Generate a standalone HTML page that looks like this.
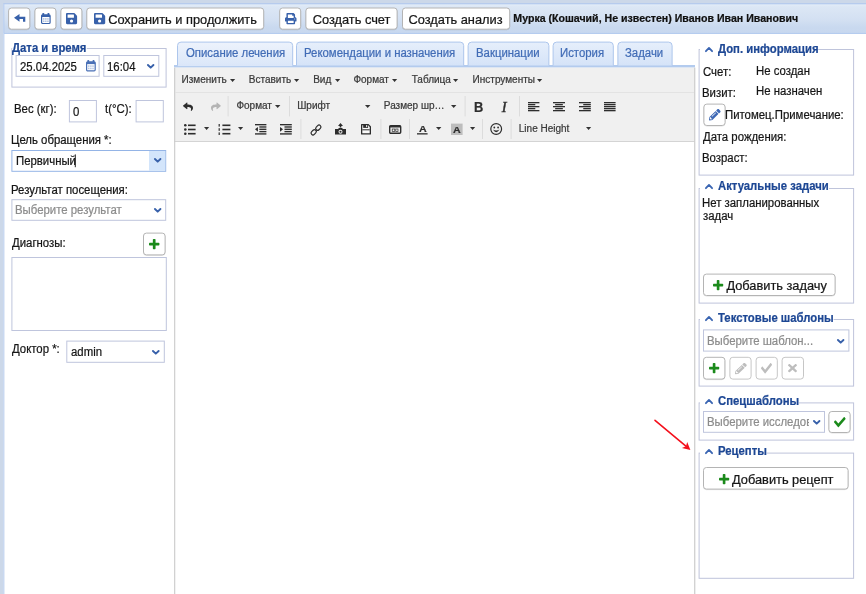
<!DOCTYPE html>
<html lang="ru">
<head>
<meta charset="utf-8">
<title>Визит</title>
<style>
*{box-sizing:border-box;margin:0;padding:0}
html,body{width:866px;height:594px;overflow:hidden}
body{background:#fff;font-family:"Liberation Sans",sans-serif;font-size:12px;color:#161616;position:relative}
#w{position:absolute;left:0;top:0;width:866px;height:594px;will-change:transform}
.a{position:absolute}
.t{position:absolute;white-space:nowrap;line-height:1;transform-origin:0 50%;-webkit-text-stroke:.22px currentColor}
svg{position:absolute;overflow:visible}
</style>
</head>
<body>
<div id="w"><svg style="left:0;top:0" width="866" height="594" viewBox="0 0 866 594"><defs><linearGradient id="tg" x1="0" y1="0" x2="0" y2="1"><stop offset="0" stop-color="#e4edf8"/><stop offset=".08" stop-color="#dce7f5"/><stop offset=".55" stop-color="#d3e0f2"/><stop offset=".8" stop-color="#c9d9ef"/><stop offset="1" stop-color="#c8d8ef"/></linearGradient><linearGradient id="ta" x1="0" y1="0" x2="0" y2="1"><stop offset="0" stop-color="#edf3fc"/><stop offset="1" stop-color="#dbe7f9"/></linearGradient><linearGradient id="tb" x1="0" y1="0" x2="0" y2="1"><stop offset="0" stop-color="#e6effb"/><stop offset="1" stop-color="#d5e3f8"/></linearGradient></defs>
<rect x="0" y="0" width="866" height="4" fill="#ccd8e9"/>
<rect x="0" y="0" width="3.3" height="594" fill="#ccd8e9"/>
<rect x="3.3" y="3.3" width="863" height="30.6" fill="#adc7ee"/>
<rect x="4.3" y="4.3" width="862" height="28.6" fill="url(#tg)"/>
<rect x="3.3" y="33.9" width="1.1" height="561" fill="#bbcfee"/>
<rect x="8.6" y="8.6" width="21.2" height="21.2" rx="2.9" fill="none" stroke="#000" stroke-opacity=".10"/>
<rect x="8.6" y="8" width="21.2" height="21.2" rx="2.9" fill="#fff" stroke="#b4b4b4"/>
<rect x="34.9" y="8.6" width="21" height="21.2" rx="2.9" fill="none" stroke="#000" stroke-opacity=".10"/>
<rect x="34.9" y="8" width="21" height="21.2" rx="2.9" fill="#fff" stroke="#b4b4b4"/>
<rect x="60.9" y="8.6" width="21" height="21.2" rx="2.9" fill="none" stroke="#000" stroke-opacity=".10"/>
<rect x="60.9" y="8" width="21" height="21.2" rx="2.9" fill="#fff" stroke="#b4b4b4"/>
<rect x="86.8" y="8.6" width="176.9" height="21.2" rx="2.9" fill="none" stroke="#000" stroke-opacity=".10"/>
<rect x="86.8" y="8" width="176.9" height="21.2" rx="2.9" fill="#fff" stroke="#b4b4b4"/>
<rect x="279.7" y="8.6" width="21" height="21.2" rx="2.9" fill="none" stroke="#000" stroke-opacity=".10"/>
<rect x="279.7" y="8" width="21" height="21.2" rx="2.9" fill="#fff" stroke="#b4b4b4"/>
<rect x="305.9" y="8.6" width="91.2" height="21.2" rx="2.9" fill="none" stroke="#000" stroke-opacity=".10"/>
<rect x="305.9" y="8" width="91.2" height="21.2" rx="2.9" fill="#fff" stroke="#b4b4b4"/>
<rect x="402.5" y="8.6" width="107.2" height="21.2" rx="2.9" fill="none" stroke="#000" stroke-opacity=".10"/>
<rect x="402.5" y="8" width="107.2" height="21.2" rx="2.9" fill="#fff" stroke="#b4b4b4"/>
<rect x="11.9" y="48.5" width="154.2" height="38.6" rx="0" fill="none" stroke="#bfc4db"/>
<rect x="12.2" y="40" width="74.6" height="14" fill="#fff"/>
<rect x="16.1" y="55.5" width="83" height="20.8" rx="0" fill="#fff" stroke="#bfc5dd"/>
<rect x="103.8" y="55.5" width="55" height="20.8" rx="0" fill="#fff" stroke="#bfc5dd"/>
<rect x="69.4" y="100.5" width="27" height="21.4" rx="0" fill="#fff" stroke="#bfc5dd"/>
<rect x="136.1" y="100.5" width="27.2" height="21.4" rx="0" fill="#fff" stroke="#bfc5dd"/>
<rect x="11.9" y="150.5" width="153.8" height="20.8" rx="0" fill="#fff" stroke="#94b4e6"/>
<rect x="149" y="151" width="16.2" height="19.8" fill="#d3e5fb"/>
<rect x="74.8" y="154.4" width="1" height="12.8" fill="#222"/>
<rect x="11.9" y="199.7" width="153.8" height="20.6" rx="0" fill="#fff" stroke="#bfc5dd"/>
<rect x="143.5" y="233.7" width="21.6" height="21.8" rx="2.9" fill="none" stroke="#000" stroke-opacity=".10"/>
<rect x="143.5" y="233.1" width="21.6" height="21.8" rx="2.9" fill="#fff" stroke="#b4b4b4"/>
<rect x="11.9" y="257.5" width="154.4" height="73" rx="0" fill="#fff" stroke="#bfc5dd"/>
<rect x="66.8" y="341.1" width="97.5" height="21.2" rx="0" fill="#fff" stroke="#bfc5dd"/>
<rect x="174" y="65" width="521" height="2.6" fill="#b3cbee"/>
<path d="M177.5 65.4 V45.6 Q177.5 42.1 181 42.1 H289.2 Q292.7 42.1 292.7 45.6 V65.4" fill="url(#ta)" stroke="#adc6ec"/>
<path d="M296.5 65.4 V45.6 Q296.5 42.1 300 42.1 H460.2 Q463.7 42.1 463.7 45.6 V65.4" fill="url(#tb)" stroke="#adc6ec"/>
<path d="M468.1 65.4 V45.6 Q468.1 42.1 471.6 42.1 H545.4 Q548.9 42.1 548.9 45.6 V65.4" fill="url(#tb)" stroke="#adc6ec"/>
<path d="M553.1 65.4 V45.6 Q553.1 42.1 556.6 42.1 H609.8 Q613.3 42.1 613.3 45.6 V65.4" fill="url(#tb)" stroke="#adc6ec"/>
<path d="M617.9 65.4 V45.6 Q617.9 42.1 621.4 42.1 H668.6 Q672.1 42.1 672.1 45.6 V65.4" fill="url(#tb)" stroke="#adc6ec"/>
<rect x="178" y="64.8" width="114.2" height="1.3" fill="#dbe7f9"/>
<rect x="174" y="67.6" width="521" height="73.6" fill="#f0f0f0"/>
<rect x="174" y="141" width="521" height="1" fill="#d4d4d4"/>
<rect x="174.1" y="67.6" width="1.15" height="527" fill="#cccccc"/>
<rect x="694.1" y="67.6" width="1.25" height="527" fill="#cecece"/>
<rect x="175" y="92" width="519" height="1" fill="#e3e3e3"/>
<rect x="227.6" y="96" width="1" height="20.4" fill="#dcdcdc"/>
<rect x="289" y="96" width="1" height="20.4" fill="#dcdcdc"/>
<rect x="464.6" y="96" width="1" height="20.4" fill="#dcdcdc"/>
<rect x="519" y="96" width="1" height="20.4" fill="#dcdcdc"/>
<rect x="300.4" y="119" width="1" height="20" fill="#dcdcdc"/>
<rect x="380.4" y="119" width="1" height="20" fill="#dcdcdc"/>
<rect x="409" y="119" width="1" height="20" fill="#dcdcdc"/>
<rect x="417" y="133.2" width="10.6" height="1.3" fill="#2d2d2d"/>
<rect x="451" y="123.6" width="11.6" height="11.4" fill="#bdbdbd"/>
<rect x="482" y="119" width="1" height="20" fill="#dcdcdc"/>
<rect x="510.6" y="119" width="1" height="20" fill="#dcdcdc"/>
<rect x="699.1" y="49.5" width="154.5" height="125.6" rx="0" fill="none" stroke="#bfc4db"/>
<rect x="700" y="41" width="118.2" height="14" fill="#fff"/>
<rect x="703.9" y="104.7" width="21.2" height="21.4" rx="2.9" fill="none" stroke="#000" stroke-opacity=".10"/>
<rect x="703.9" y="104.1" width="21.2" height="21.4" rx="2.9" fill="#fff" stroke="#b4b4b4"/>
<rect x="699.1" y="188.5" width="154.5" height="114.6" rx="0" fill="none" stroke="#bfc4db"/>
<rect x="700" y="180" width="129" height="14" fill="#fff"/>
<rect x="703.5" y="274.7" width="131.6" height="21.4" rx="2.9" fill="none" stroke="#000" stroke-opacity=".10"/>
<rect x="703.5" y="274.1" width="131.6" height="21.4" rx="2.9" fill="#fff" stroke="#b4b4b4"/>
<rect x="699.1" y="319.5" width="154.5" height="66.6" rx="0" fill="none" stroke="#bfc4db"/>
<rect x="700" y="311" width="133.6" height="14" fill="#fff"/>
<rect x="703.5" y="329.9" width="145.4" height="21.2" rx="0" fill="#fff" stroke="#bfc5dd"/>
<rect x="703.5" y="357.9" width="21.4" height="21.8" rx="2.9" fill="none" stroke="#000" stroke-opacity=".10"/>
<rect x="703.5" y="357.3" width="21.4" height="21.8" rx="2.9" fill="#fff" stroke="#b4b4b4"/>
<rect x="729.9" y="357.3" width="21.2" height="21.8" rx="2.9" fill="#fff" stroke="#c6c6c6"/>
<rect x="756.1" y="357.3" width="21.2" height="21.8" rx="2.9" fill="#fff" stroke="#c6c6c6"/>
<rect x="782.1" y="357.3" width="21.4" height="21.8" rx="2.9" fill="#fff" stroke="#c6c6c6"/>
<rect x="699.1" y="402.9" width="154.5" height="37.2" rx="0" fill="none" stroke="#bfc4db"/>
<rect x="700" y="394.4" width="99" height="14" fill="#fff"/>
<rect x="703.5" y="411.5" width="121" height="20.8" rx="0" fill="#fff" stroke="#bfc5dd"/>
<rect x="828.9" y="412.1" width="21.2" height="21" rx="2.9" fill="none" stroke="#000" stroke-opacity=".10"/>
<rect x="828.9" y="411.5" width="21.2" height="21" rx="2.9" fill="#fff" stroke="#b4b4b4"/>
<rect x="699.1" y="453.1" width="154.5" height="125.2" rx="0" fill="none" stroke="#bfc4db"/>
<rect x="700" y="444.6" width="66.6" height="14" fill="#fff"/>
<rect x="703.5" y="468.1" width="144.6" height="21.6" rx="2.9" fill="none" stroke="#000" stroke-opacity=".10"/>
<rect x="703.5" y="467.5" width="144.6" height="21.6" rx="2.9" fill="#fff" stroke="#b4b4b4"/>
</svg>
<svg style="left:13.9px;top:14.4px" width="11.3" height="7.7" viewBox="0 0 11.3 7.7" preserveAspectRatio="none"><path d="M0 3.850 L5.500 0 V2.700 H11.300 V7.700 H9 V5 H5.500 V7.700 Z" fill="#3861aa"/></svg>
<svg style="left:40.5px;top:13.3px" width="9.7" height="11.1" viewBox="0 0 9.7 11.1" preserveAspectRatio="none"><rect x="1.400" y="0" width="1.700" height="2.600" rx=".5" fill="#3861aa"/><rect x="6.600" y="0" width="1.700" height="2.600" rx=".5" fill="#3861aa"/><rect x=".6" y="1.900" width="8.500" height="8.600" rx="1.100" fill="#fff" stroke="#3861aa" stroke-width="1.200"/><rect x=".6" y="1.900" width="8.500" height="2.100" fill="#3861aa"/><rect x="2.0" y="5.2" width="1.500" height="1.500" fill="#3861aa" fill-opacity=".4"/><rect x="4.1" y="5.2" width="1.500" height="1.500" fill="#3861aa" fill-opacity=".4"/><rect x="6.2" y="5.2" width="1.500" height="1.500" fill="#3861aa" fill-opacity=".4"/><rect x="2.0" y="7.5" width="1.500" height="1.500" fill="#3861aa" fill-opacity=".4"/><rect x="4.1" y="7.5" width="1.500" height="1.500" fill="#3861aa" fill-opacity=".4"/><rect x="6.2" y="7.5" width="1.500" height="1.500" fill="#3861aa" fill-opacity=".4"/></svg>
<svg style="left:65.9px;top:13.3px" width="11.1" height="11.2" viewBox="0 32 448 448" preserveAspectRatio="none"><path fill="#3861aa" d="M433.941 129.941l-83.882-83.882A48 48 0 0 0 316.118 32H48C21.490 32 0 53.490 0 80v352c0 26.510 21.490 48 48 48h352c26.510 0 48-21.490 48-48V163.882a48 48 0 0 0-14.059-33.941zM224 416c-35.346 0-64-28.654-64-64 0-35.346 28.654-64 64-64s64 28.654 64 64c0 35.346-28.654 64-64 64zm96-304.520V212c0 6.627-5.373 12-12 12H76c-6.627 0-12-5.373-12-12V108c0-6.627 5.373-12 12-12h228.520c3.183 0 6.235 1.264 8.485 3.515l3.480 3.480A11.996 11.996 0 0 1 320 111.480z"/></svg>
<svg style="left:93.9px;top:13.3px" width="11.2" height="11.2" viewBox="0 32 448 448" preserveAspectRatio="none"><path fill="#3861aa" d="M433.941 129.941l-83.882-83.882A48 48 0 0 0 316.118 32H48C21.490 32 0 53.490 0 80v352c0 26.510 21.490 48 48 48h352c26.510 0 48-21.490 48-48V163.882a48 48 0 0 0-14.059-33.941zM224 416c-35.346 0-64-28.654-64-64 0-35.346 28.654-64 64-64s64 28.654 64 64c0 35.346-28.654 64-64 64zm96-304.520V212c0 6.627-5.373 12-12 12H76c-6.627 0-12-5.373-12-12V108c0-6.627 5.373-12 12-12h228.520c3.183 0 6.235 1.264 8.485 3.515l3.480 3.480A11.996 11.996 0 0 1 320 111.480z"/></svg>
<span class="t" style="left:108.16px;top:14.00px;font-size:12.8px;color:#161616;">Сохранить и продолжить</span>
<svg style="left:284.5px;top:13.3px" width="11.5" height="11.3" viewBox="0 0 512 512" preserveAspectRatio="none"><path fill="#3861aa" d="M448 192V77.250c0-8.490-3.370-16.620-9.370-22.630L393.370 9.370c-6-6-14.140-9.370-22.630-9.370H96C78.330 0 64 14.330 64 32v160c-35.350 0-64 28.650-64 64v112c0 8.840 7.160 16 16 16h48v96c0 17.670 14.330 32 32 32h320c17.670 0 32-14.330 32-32v-96h48c8.840 0 16-7.160 16-16V256c0-35.350-28.650-64-64-64zm-64 256H128v-96h256v96zm0-224H128V64h192v48c0 8.840 7.160 16 16 16h48v96zm48 72c-13.250 0-24-10.750-24-24 0-13.260 10.750-24 24-24s24 10.740 24 24c0 13.250-10.750 24-24 24z"/></svg>
<span class="t" style="left:312.76px;top:14.00px;font-size:12.8px;color:#161616;">Создать счет</span>
<span class="t" style="left:408.56px;top:14.00px;font-size:12.8px;color:#161616;">Создать анализ</span>
<span class="t" style="left:513.35px;top:13.00px;font-size:10.6px;color:#111;font-weight:bold;">Мурка (Кошачий, Не известен) Иванов Иван Иванович</span>
<span class="t" style="left:12.40px;top:42.00px;font-size:12px;color:#1d4794;font-weight:bold;transform:scaleX(0.9430);">Дата и время</span>
<span class="t" style="left:19.88px;top:61.00px;font-size:12px;color:#161616;transform:scaleX(0.9480);">25.04.2025</span>
<svg style="left:86.4px;top:60.2px" width="9.8" height="11.4" viewBox="0 0 9.7 11.1" preserveAspectRatio="none"><rect x="1.400" y="0" width="1.700" height="2.600" rx=".5" fill="#4a70b6"/><rect x="6.600" y="0" width="1.700" height="2.600" rx=".5" fill="#4a70b6"/><rect x=".6" y="1.900" width="8.500" height="8.600" rx="1.100" fill="#fff" stroke="#4a70b6" stroke-width="1.200"/><rect x=".6" y="1.900" width="8.500" height="2.100" fill="#4a70b6"/><rect x="2.0" y="5.2" width="1.500" height="1.500" fill="#4a70b6" fill-opacity=".4"/><rect x="4.1" y="5.2" width="1.500" height="1.500" fill="#4a70b6" fill-opacity=".4"/><rect x="6.2" y="5.2" width="1.500" height="1.500" fill="#4a70b6" fill-opacity=".4"/><rect x="2.0" y="7.5" width="1.500" height="1.500" fill="#4a70b6" fill-opacity=".4"/><rect x="4.1" y="7.5" width="1.500" height="1.500" fill="#4a70b6" fill-opacity=".4"/><rect x="6.2" y="7.5" width="1.500" height="1.500" fill="#4a70b6" fill-opacity=".4"/></svg>
<span class="t" style="left:107.05px;top:61.00px;font-size:12px;color:#161616;transform:scaleX(0.9480);">16:04</span>
<svg style="left:146.8px;top:63.8px" width="7.4" height="4.6" viewBox="0 0 7.4 4.6" preserveAspectRatio="none"><path d="M0.95 0.95 L3.6999999999999886 3.6500000000000083 L6.449999999999977 0.95" fill="none" stroke="#3861aa" stroke-width="1.9" stroke-linecap="round" stroke-linejoin="round"/></svg>
<span class="t" style="left:13.60px;top:103.00px;font-size:12px;color:#161616;transform:scaleX(0.9480);">Вес (кг):</span>
<span class="t" style="left:72.52px;top:106.00px;font-size:12px;color:#161616;transform:scaleX(0.9480);">0</span>
<span class="t" style="left:105.24px;top:103.00px;font-size:12px;color:#161616;transform:scaleX(0.9480);">t(°C):</span>
<span class="t" style="left:11.00px;top:134.00px;font-size:12px;color:#161616;transform:scaleX(0.9480);">Цель обращения *:</span>
<span class="t" style="left:15.50px;top:155.00px;font-size:12px;color:#161616;transform:scaleX(0.9480);">Первичный</span>
<svg style="left:153.6px;top:158.1px" width="7.4" height="4.6" viewBox="0 0 7.4 4.6" preserveAspectRatio="none"><path d="M0.95 0.95 L3.700000000000003 3.649999999999994 L6.4500000000000055 0.95" fill="none" stroke="#3861aa" stroke-width="1.9" stroke-linecap="round" stroke-linejoin="round"/></svg>
<span class="t" style="left:11.00px;top:184.00px;font-size:12px;color:#161616;transform:scaleX(0.9480);">Результат посещения:</span>
<span class="t" style="left:15.40px;top:204.00px;font-size:12px;color:#8c8c8c;transform:scaleX(0.9480);">Выберите результат</span>
<svg style="left:153.6px;top:208.2px" width="7.4" height="4.6" viewBox="0 0 7.4 4.6" preserveAspectRatio="none"><path d="M0.95 0.95 L3.700000000000003 3.6500000000000226 L6.4500000000000055 0.95" fill="none" stroke="#3861aa" stroke-width="1.9" stroke-linecap="round" stroke-linejoin="round"/></svg>
<span class="t" style="left:11.60px;top:237.00px;font-size:12px;color:#161616;transform:scaleX(0.9480);">Диагнозы:</span>
<svg style="left:149px;top:239px" width="10.4" height="10.2" viewBox="0 0 10 10" preserveAspectRatio="none"><rect x="3.700" y="0" width="2.600" height="10" rx=".7" fill="#1b8a1b"/><rect x="0" y="3.700" width="10" height="2.600" rx=".7" fill="#1b8a1b"/></svg>
<span class="t" style="left:11.60px;top:343.00px;font-size:12px;color:#161616;transform:scaleX(0.9480);">Доктор *:</span>
<span class="t" style="left:70.53px;top:346.00px;font-size:12px;color:#161616;transform:scaleX(0.9480);">admin</span>
<svg style="left:152.2px;top:349.6px" width="7.6" height="4.6" viewBox="0 0 7.6 4.6" preserveAspectRatio="none"><path d="M0.95 0.95 L3.8000000000000114 3.6499999999999657 L6.650000000000023 0.95" fill="none" stroke="#3861aa" stroke-width="1.9" stroke-linecap="round" stroke-linejoin="round"/></svg>
<span class="t" style="left:185.51px;top:47.00px;font-size:12px;color:#416cb6;transform:scaleX(0.9480);">Описание лечения</span>
<span class="t" style="left:304.00px;top:47.00px;font-size:12px;color:#416cb6;transform:scaleX(0.9480);">Рекомендации и назначения</span>
<span class="t" style="left:476.00px;top:47.00px;font-size:12px;color:#416cb6;transform:scaleX(0.9480);">Вакцинации</span>
<span class="t" style="left:560.00px;top:47.00px;font-size:12px;color:#416cb6;transform:scaleX(0.9480);">История</span>
<span class="t" style="left:625.42px;top:47.00px;font-size:12px;color:#416cb6;transform:scaleX(0.9480);">Задачи</span>
<span class="t" style="left:181.60px;top:75.00px;font-size:10px;color:#3a3a3a;">Изменить</span>
<svg style="left:230px;top:78.9px" width="5.2" height="3.0" viewBox="0 0 5.2 3.0" preserveAspectRatio="none"><path d="M0 0 H5.2 L2.6 3.0 Z" fill="#333"/></svg>
<span class="t" style="left:248.80px;top:75.00px;font-size:10px;color:#3a3a3a;">Вставить</span>
<svg style="left:294.4px;top:78.9px" width="5.2" height="3.0" viewBox="0 0 5.2 3.0" preserveAspectRatio="none"><path d="M0 0 H5.2 L2.6 3.0 Z" fill="#333"/></svg>
<span class="t" style="left:313.20px;top:75.00px;font-size:10px;color:#3a3a3a;">Вид</span>
<svg style="left:335px;top:78.9px" width="5.2" height="3.0" viewBox="0 0 5.2 3.0" preserveAspectRatio="none"><path d="M0 0 H5.2 L2.6 3.0 Z" fill="#333"/></svg>
<span class="t" style="left:353.43px;top:75.00px;font-size:10px;color:#3a3a3a;">Формат</span>
<svg style="left:392px;top:78.9px" width="5.2" height="3.0" viewBox="0 0 5.2 3.0" preserveAspectRatio="none"><path d="M0 0 H5.2 L2.6 3.0 Z" fill="#333"/></svg>
<span class="t" style="left:411.67px;top:75.00px;font-size:10px;color:#3a3a3a;">Таблица</span>
<svg style="left:453.4px;top:78.9px" width="5.2" height="3.0" viewBox="0 0 5.2 3.0" preserveAspectRatio="none"><path d="M0 0 H5.2 L2.6 3.0 Z" fill="#333"/></svg>
<span class="t" style="left:472.60px;top:75.00px;font-size:10px;color:#3a3a3a;">Инструменты</span>
<svg style="left:537.4px;top:78.9px" width="5.2" height="3.0" viewBox="0 0 5.2 3.0" preserveAspectRatio="none"><path d="M0 0 H5.2 L2.6 3.0 Z" fill="#333"/></svg>
<svg style="left:183px;top:102px" width="10" height="9.6" viewBox="0 0 512 512" preserveAspectRatio="none"><path fill="#2d2d2d" d="M8.309 189.836L184.313 37.851C199.719 24.546 224 35.347 224 56.015v80.053c160.629 1.839 288 34.032 288 186.258 0 61.441-39.581 122.309-83.333 154.132-13.653 9.931-33.111-2.533-28.077-18.631 45.344-145.012-21.507-183.510-176.590-185.742V360c0 20.700-24.300 31.453-39.687 18.164l-176.004-152c-11.071-9.562-11.086-26.753 0-36.328z"/></svg>
<svg style="left:210.6px;top:102px" width="9.8" height="9.6" viewBox="0 0 512 512" preserveAspectRatio="none"><g transform="translate(512,0) scale(-1,1)"><path fill="#b4b4b4" d="M8.309 189.836L184.313 37.851C199.719 24.546 224 35.347 224 56.015v80.053c160.629 1.839 288 34.032 288 186.258 0 61.441-39.581 122.309-83.333 154.132-13.653 9.931-33.111-2.533-28.077-18.631 45.344-145.012-21.507-183.510-176.590-185.742V360c0 20.700-24.300 31.453-39.687 18.164l-176.004-152c-11.071-9.562-11.086-26.753 0-36.328z"/></g></svg>
<span class="t" style="left:236.43px;top:101.00px;font-size:10px;color:#3a3a3a;">Формат</span>
<svg style="left:275px;top:104.85px" width="5.4" height="3.0" viewBox="0 0 5.4 3.0" preserveAspectRatio="none"><path d="M0 0 H5.4 L2.7 3.0 Z" fill="#333"/></svg>
<span class="t" style="left:297.20px;top:101.00px;font-size:10px;color:#3a3a3a;">Шрифт</span>
<svg style="left:364.6px;top:104.85px" width="5.4" height="3.0" viewBox="0 0 5.4 3.0" preserveAspectRatio="none"><path d="M0 0 H5.4 L2.7 3.0 Z" fill="#333"/></svg>
<span class="t" style="left:383.80px;top:101.00px;font-size:10px;color:#3a3a3a;">Размер шр…</span>
<svg style="left:451px;top:104.85px" width="5.4" height="3.0" viewBox="0 0 5.4 3.0" preserveAspectRatio="none"><path d="M0 0 H5.4 L2.7 3.0 Z" fill="#333"/></svg>
<span class="t" style="left:474.36px;top:100.00px;font-size:14px;color:#2d2d2d;font-weight:bold;transform:scaleX(0.9176);">B</span>
<span class="t" style="left:501.78px;top:100.00px;font-size:14.5px;color:#2d2d2d;font-family:'Liberation Serif',serif;font-style:italic;-webkit-text-stroke:.45px #2d2d2d;">I</span>
<svg style="left:528px;top:102.4px" width="11.4" height="9.3" viewBox="0 0 11.4 9.3" preserveAspectRatio="none"><rect x="0.00" y="0" width="11.40" height="1.3" fill="#2d2d2d"/><rect x="0.00" y="2.0" width="7.30" height="1.3" fill="#2d2d2d"/><rect x="0.00" y="4.0" width="11.40" height="1.3" fill="#2d2d2d"/><rect x="0.00" y="6.0" width="7.30" height="1.3" fill="#2d2d2d"/><rect x="0.00" y="8.0" width="11.40" height="1.3" fill="#2d2d2d"/></svg>
<svg style="left:553px;top:102.4px" width="12" height="9.3" viewBox="0 0 12 9.3" preserveAspectRatio="none"><rect x="0.00" y="0" width="12.00" height="1.3" fill="#2d2d2d"/><rect x="2.16" y="2.0" width="7.68" height="1.3" fill="#2d2d2d"/><rect x="0.00" y="4.0" width="12.00" height="1.3" fill="#2d2d2d"/><rect x="2.16" y="6.0" width="7.68" height="1.3" fill="#2d2d2d"/><rect x="0.00" y="8.0" width="12.00" height="1.3" fill="#2d2d2d"/></svg>
<svg style="left:578.6px;top:102.4px" width="11.8" height="9.3" viewBox="0 0 11.8 9.3" preserveAspectRatio="none"><rect x="0.00" y="0" width="11.80" height="1.3" fill="#2d2d2d"/><rect x="4.25" y="2.0" width="7.55" height="1.3" fill="#2d2d2d"/><rect x="0.00" y="4.0" width="11.80" height="1.3" fill="#2d2d2d"/><rect x="4.25" y="6.0" width="7.55" height="1.3" fill="#2d2d2d"/><rect x="0.00" y="8.0" width="11.80" height="1.3" fill="#2d2d2d"/></svg>
<svg style="left:604px;top:102.4px" width="11.6" height="9.3" viewBox="0 0 11.6 9.3" preserveAspectRatio="none"><rect x="0.00" y="0" width="11.60" height="1.3" fill="#2d2d2d"/><rect x="0.00" y="2.0" width="11.60" height="1.3" fill="#2d2d2d"/><rect x="0.00" y="4.0" width="11.60" height="1.3" fill="#2d2d2d"/><rect x="0.00" y="6.0" width="11.60" height="1.3" fill="#2d2d2d"/><rect x="0.00" y="8.0" width="11.60" height="1.3" fill="#2d2d2d"/></svg>
<svg style="left:184px;top:124px" width="11.6" height="11" viewBox="0 0 11.6 11" preserveAspectRatio="none"><circle cx="1.300" cy="1.3" r="1.300" fill="#2d2d2d"/><rect x="4" y="0.5" width="7.600" height="1.600" fill="#2d2d2d"/><circle cx="1.300" cy="5.5" r="1.300" fill="#2d2d2d"/><rect x="4" y="4.7" width="7.600" height="1.600" fill="#2d2d2d"/><circle cx="1.300" cy="9.7" r="1.300" fill="#2d2d2d"/><rect x="4" y="8.899999999999999" width="7.600" height="1.600" fill="#2d2d2d"/></svg>
<svg style="left:204px;top:126.55px" width="5.2" height="3.0" viewBox="0 0 5.2 3.0" preserveAspectRatio="none"><path d="M0 0 H5.2 L2.6 3.0 Z" fill="#333"/></svg>
<svg style="left:218px;top:124px" width="12.4" height="11" viewBox="0 0 12.4 11" preserveAspectRatio="none"><rect x="0.600" y="0.0" width="1.200" height="2.600" fill="#2d2d2d"/><rect x="4.400" y="0.5" width="8" height="1.600" fill="#2d2d2d"/><rect x="0.600" y="4.2" width="1.200" height="2.600" fill="#2d2d2d"/><rect x="4.400" y="4.7" width="8" height="1.600" fill="#2d2d2d"/><rect x="0.600" y="8.399999999999999" width="1.200" height="2.600" fill="#2d2d2d"/><rect x="4.400" y="8.899999999999999" width="8" height="1.600" fill="#2d2d2d"/></svg>
<svg style="left:238px;top:126.55px" width="5.2" height="3.0" viewBox="0 0 5.2 3.0" preserveAspectRatio="none"><path d="M0 0 H5.2 L2.6 3.0 Z" fill="#333"/></svg>
<svg style="left:255px;top:124px" width="11.4" height="10.6" viewBox="0 0 11.6 10.55" preserveAspectRatio="none"><rect x="0" y="0" width="11.6" height="1.350" fill="#2d2d2d"/><rect x="4.4" y="2.3" width="7.199999999999999" height="1.350" fill="#2d2d2d"/><rect x="4.4" y="4.6" width="7.199999999999999" height="1.350" fill="#2d2d2d"/><rect x="4.4" y="6.9" width="7.199999999999999" height="1.350" fill="#2d2d2d"/><rect x="0" y="9.2" width="11.6" height="1.350" fill="#2d2d2d"/><path d="M3 2.900 V7.700 L0 5.300 Z" fill="#2d2d2d"/></svg>
<svg style="left:280.2px;top:124px" width="11.8" height="10.6" viewBox="0 0 11.6 10.55" preserveAspectRatio="none"><rect x="0" y="0" width="11.6" height="1.350" fill="#2d2d2d"/><rect x="4.4" y="2.3" width="7.199999999999999" height="1.350" fill="#2d2d2d"/><rect x="4.4" y="4.6" width="7.199999999999999" height="1.350" fill="#2d2d2d"/><rect x="4.4" y="6.9" width="7.199999999999999" height="1.350" fill="#2d2d2d"/><rect x="0" y="9.2" width="11.6" height="1.350" fill="#2d2d2d"/><path d="M0 2.900 V7.700 L3 5.300 Z" fill="#2d2d2d"/></svg>
<svg style="left:309.6px;top:123.6px" width="12.0" height="12.0" viewBox="0 0 12 12" preserveAspectRatio="none"><g fill="none" stroke="#2d2d2d" stroke-width="1.200"><rect x="-2.900" y="-1.900" width="5.800" height="3.800" rx="1.900" transform="translate(8.300,3.700) rotate(-45)"/><rect x="-2.900" y="-1.900" width="5.800" height="3.800" rx="1.900" transform="translate(3.700,8.300) rotate(-45)"/></g></svg>
<svg style="left:335px;top:123.4px" width="11" height="11.6" viewBox="0 0 11 11.6" preserveAspectRatio="none"><path d="M5.500 0 L8 2.900 H6.300 V4.600 H4.700 V2.900 H3 Z" fill="#2d2d2d"/><path d="M0 6 H3.200 L3.800 5 H7.200 L7.800 6 H11 V11.600 H0 Z" fill="#2d2d2d"/><circle cx="5.500" cy="8.700" r="2" fill="#f0f0f0"/><circle cx="5.500" cy="8.700" r="1.050" fill="#2d2d2d"/></svg>
<svg style="left:361px;top:124px" width="10" height="10.6" viewBox="0 0 10 10.6" preserveAspectRatio="none"><path d="M.65 .65 H7.300 L9.350 2.700 V9.950 H.65 Z" fill="#fafafa" stroke="#2d2d2d" stroke-width="1.300" stroke-linejoin="round"/><rect x="2.200" y=".6" width="4.900" height="3.300" fill="#2d2d2d"/><rect x="5.100" y="1.100" width="1.100" height="2" fill="#f0f0f0"/><rect x="1.300" y="5.300" width="7.400" height="1" fill="#2d2d2d"/></svg>
<svg style="left:388.6px;top:125px" width="12.4" height="9" viewBox="0 0 12.4 9" preserveAspectRatio="none"><rect x="0.700" y="0.700" width="11" height="7.600" rx="1" fill="none" stroke="#2d2d2d" stroke-width="1.400"/><rect x="0.700" y="0.700" width="11" height="1.800" fill="#2d2d2d"/><rect x="3.200" y="4" width="2.600" height="2.600" fill="none" stroke="#2d2d2d" stroke-width=".7"/><rect x="6.800" y="4" width="2.200" height="2.600" fill="none" stroke="#2d2d2d" stroke-width=".7"/></svg>
<span class="t" style="left:418.60px;top:124.00px;font-size:9.5px;color:#2d2d2d;font-weight:bold;transform:scaleX(1.1218);">A</span>
<svg style="left:435.6px;top:126.55px" width="5.4" height="3.0" viewBox="0 0 5.4 3.0" preserveAspectRatio="none"><path d="M0 0 H5.4 L2.7 3.0 Z" fill="#333"/></svg>
<span class="t" style="left:453.00px;top:125.00px;font-size:9.5px;color:#2d2d2d;font-weight:bold;transform:scaleX(1.1218);">A</span>
<svg style="left:470.4px;top:126.55px" width="5.2" height="3.0" viewBox="0 0 5.2 3.0" preserveAspectRatio="none"><path d="M0 0 H5.2 L2.6 3.0 Z" fill="#333"/></svg>
<svg style="left:490px;top:123.2px" width="12.4" height="12.0" viewBox="0 0 12.4 12" preserveAspectRatio="none"><circle cx="6.200" cy="6" r="5.400" fill="none" stroke="#2d2d2d" stroke-width="1.200"/><circle cx="4.300" cy="4.500" r=".9" fill="#2d2d2d"/><circle cx="8.100" cy="4.500" r=".9" fill="#2d2d2d"/><path d="M2.900 6.500 Q6.200 11.800 9.500 6.500 Q6.200 8.300 2.900 6.500 Z" fill="#2d2d2d"/></svg>
<span class="t" style="left:518.80px;top:124.00px;font-size:10px;color:#3a3a3a;">Line Height</span>
<svg style="left:586.4px;top:127.25px" width="5.2" height="3.0" viewBox="0 0 5.2 3.0" preserveAspectRatio="none"><path d="M0 0 H5.2 L2.6 3.0 Z" fill="#333"/></svg>
<svg style="left:704.6px;top:47.4px" width="8.0" height="5.1" viewBox="0 0 8.0 5.1" preserveAspectRatio="none"><path d="M0.9 4.200000000000001 L4.0 0.9 L7.1 4.200000000000001" fill="none" stroke="#3a65b2" stroke-width="1.8" stroke-linecap="round" stroke-linejoin="round"/></svg>
<span class="t" style="left:718.40px;top:43.00px;font-size:12px;color:#1d4794;font-weight:bold;transform:scaleX(0.9430);">Доп. информация</span>
<span class="t" style="left:702.56px;top:66.00px;font-size:12px;color:#161616;transform:scaleX(0.9480);">Счет:</span>
<span class="t" style="left:755.60px;top:65.00px;font-size:12px;color:#161616;transform:scaleX(0.9480);">Не создан</span>
<span class="t" style="left:702.10px;top:87.00px;font-size:12px;color:#161616;transform:scaleX(0.9480);">Визит:</span>
<span class="t" style="left:755.60px;top:85.00px;font-size:12px;color:#161616;transform:scaleX(0.9480);">Не назначен</span>
<svg style="left:708.8px;top:109.2px" width="11.6" height="11.4" viewBox="0 0 512 512" preserveAspectRatio="none"><path fill="#3d68b5" d="M497.900 142.100l-46.100 46.100c-4.700 4.700-12.300 4.700-17 0l-111-111c-4.700-4.700-4.700-12.300 0-17l46.100-46.100c18.700-18.700 49.100-18.700 67.900 0l60.100 60.100c18.800 18.700 18.800 49.100 0 67.900zM284.200 99.800L21.600 362.400.4 483.900c-2.900 16.400 11.400 30.600 27.800 27.800l121.500-21.300 262.600-262.600c4.700-4.700 4.700-12.300 0-17l-111-111c-4.800-4.700-12.400-4.700-17.100 0zM124.100 339.900c-5.500-5.500-5.500-14.300 0-19.800l154-154c5.500-5.500 14.300-5.500 19.800 0s5.500 14.300 0 19.800l-154 154c-5.500 5.500-14.300 5.500-19.800 0zM88 424h48v36.300l-64.500 11.300-31.100-31.100L51.700 376H88v48z"/></svg>
<span class="t" style="left:725.30px;top:109.00px;font-size:12px;color:#161616;transform:scaleX(0.9480);">Питомец.Примечание:</span>
<span class="t" style="left:703.10px;top:131.00px;font-size:12px;color:#161616;transform:scaleX(0.9480);">Дата рождения:</span>
<span class="t" style="left:702.30px;top:152.00px;font-size:12px;color:#161616;transform:scaleX(0.9480);">Возраст:</span>
<svg style="left:704.6px;top:184.4px" width="8.0" height="5.1" viewBox="0 0 8.0 5.1" preserveAspectRatio="none"><path d="M0.9 4.199999999999994 L4.0 0.9 L7.1 4.199999999999994" fill="none" stroke="#3a65b2" stroke-width="1.8" stroke-linecap="round" stroke-linejoin="round"/></svg>
<span class="t" style="left:718.05px;top:180.00px;font-size:12px;color:#1d4794;font-weight:bold;transform:scaleX(0.9430);">Актуальные задачи</span>
<span class="t" style="left:702.30px;top:197.00px;font-size:12px;color:#161616;transform:scaleX(0.9480);">Нет запланированных</span>
<span class="t" style="left:702.54px;top:210.00px;font-size:12px;color:#161616;transform:scaleX(0.9480);">задач</span>
<svg style="left:713px;top:280px" width="10.2" height="10.2" viewBox="0 0 10 10" preserveAspectRatio="none"><rect x="3.700" y="0" width="2.600" height="10" rx=".7" fill="#1b8a1b"/><rect x="0" y="3.700" width="10" height="2.600" rx=".7" fill="#1b8a1b"/></svg>
<span class="t" style="left:726.40px;top:280.00px;font-size:12.8px;color:#161616;">Добавить задачу</span>
<svg style="left:704.6px;top:315.79999999999995px" width="8.0" height="5.1" viewBox="0 0 8.0 5.1" preserveAspectRatio="none"><path d="M0.9 4.200000000000022 L4.0 0.9 L7.1 4.200000000000022" fill="none" stroke="#3a65b2" stroke-width="1.8" stroke-linecap="round" stroke-linejoin="round"/></svg>
<span class="t" style="left:718.40px;top:312.00px;font-size:12px;color:#1d4794;font-weight:bold;transform:scaleX(0.9430);">Текстовые шаблоны</span>
<span class="t" style="left:706.80px;top:335.00px;font-size:12px;color:#8c8c8c;transform:scaleX(0.9480);">Выберите шаблон...</span>
<svg style="left:837px;top:338.8px" width="7.4" height="4.6" viewBox="0 0 7.4 4.6" preserveAspectRatio="none"><path d="M0.95 0.95 L3.6999999999999886 3.6499999999999657 L6.449999999999977 0.95" fill="none" stroke="#3861aa" stroke-width="1.9" stroke-linecap="round" stroke-linejoin="round"/></svg>
<svg style="left:709.4px;top:363px" width="10.2" height="10.2" viewBox="0 0 10 10" preserveAspectRatio="none"><rect x="3.700" y="0" width="2.600" height="10" rx=".7" fill="#1b8a1b"/><rect x="0" y="3.700" width="10" height="2.600" rx=".7" fill="#1b8a1b"/></svg>
<svg style="left:734.6px;top:362.8px" width="11.8" height="11.2" viewBox="0 0 512 512" preserveAspectRatio="none"><path fill="#bdbdbd" d="M497.900 142.100l-46.100 46.100c-4.700 4.700-12.300 4.700-17 0l-111-111c-4.700-4.700-4.700-12.300 0-17l46.100-46.100c18.700-18.700 49.100-18.700 67.900 0l60.100 60.100c18.800 18.700 18.800 49.100 0 67.900zM284.200 99.800L21.600 362.400.4 483.900c-2.900 16.400 11.400 30.600 27.800 27.800l121.500-21.300 262.600-262.600c4.700-4.700 4.700-12.300 0-17l-111-111c-4.800-4.700-12.400-4.700-17.100 0zM124.100 339.900c-5.500-5.500-5.500-14.300 0-19.800l154-154c5.500-5.500 14.300-5.500 19.800 0s5.500 14.300 0 19.800l-154 154c-5.500 5.500-14.300 5.500-19.800 0zM88 424h48v36.300l-64.500 11.300-31.100-31.100L51.700 376H88v48z"/></svg>
<svg style="left:761px;top:362.8px" width="11" height="10.4" viewBox="0 65 512 382" preserveAspectRatio="none"><path fill="#bdbdbd" d="M173.898 439.404l-166.400-166.400c-9.997-9.997-9.997-26.206 0-36.204l36.203-36.204c9.997-9.998 26.207-9.998 36.204 0L192 312.690 432.095 72.596c9.997-9.997 26.207-9.997 36.204 0l36.203 36.204c9.997 9.997 9.997 26.206 0 36.204l-294.400 294.401c-9.998 9.997-26.207 9.997-36.204-.001z"/></svg>
<svg style="left:788.4px;top:364.4px" width="9.0" height="8.2" viewBox="0 80 352 352" preserveAspectRatio="none"><path fill="#bdbdbd" d="M242.720 256l100.070-100.070c12.280-12.280 12.280-32.190 0-44.480l-22.240-22.240c-12.280-12.280-32.190-12.280-44.480 0L176 189.280 75.930 89.210c-12.280-12.280-32.190-12.280-44.480 0L9.210 111.450c-12.280 12.280-12.280 32.190 0 44.480L109.280 256 9.210 356.070c-12.280 12.280-12.280 32.190 0 44.480l22.240 22.240c12.280 12.280 32.200 12.280 44.480 0L176 322.720l100.070 100.070c12.280 12.280 32.200 12.280 44.480 0l22.240-22.240c12.280-12.280 12.280-32.190 0-44.480L242.720 256z"/></svg>
<svg style="left:704.6px;top:399.0px" width="8.0" height="5.1" viewBox="0 0 8.0 5.1" preserveAspectRatio="none"><path d="M0.9 4.200000000000022 L4.0 0.9 L7.1 4.200000000000022" fill="none" stroke="#3a65b2" stroke-width="1.8" stroke-linecap="round" stroke-linejoin="round"/></svg>
<span class="t" style="left:717.98px;top:395.00px;font-size:12px;color:#1d4794;font-weight:bold;transform:scaleX(0.9430);">Спецшаблоны</span>
<div class="a" style="left:704px;top:412px;width:105px;height:19px;overflow:hidden">
<span class="t" style="left:2.80px;top:4.00px;font-size:12px;color:#8c8c8c;transform:scaleX(0.9480);">Выберите исследование</span>
</div>
<svg style="left:812.6px;top:419.6px" width="7.4" height="4.6" viewBox="0 0 7.4 4.6" preserveAspectRatio="none"><path d="M0.95 0.95 L3.6999999999999886 3.6499999999999657 L6.449999999999977 0.95" fill="none" stroke="#3861aa" stroke-width="1.9" stroke-linecap="round" stroke-linejoin="round"/></svg>
<svg style="left:833.6px;top:416.8px" width="11.6" height="10.2" viewBox="0 65 512 382" preserveAspectRatio="none"><path fill="#1b8a1b" d="M173.898 439.404l-166.400-166.400c-9.997-9.997-9.997-26.206 0-36.204l36.203-36.204c9.997-9.998 26.207-9.998 36.204 0L192 312.690 432.095 72.596c9.997-9.997 26.207-9.997 36.204 0l36.203 36.204c9.997 9.997 9.997 26.206 0 36.204l-294.400 294.401c-9.998 9.997-26.207 9.997-36.204-.001z"/></svg>
<svg style="left:704.6px;top:449.0px" width="8.0" height="5.1" viewBox="0 0 8.0 5.1" preserveAspectRatio="none"><path d="M0.9 4.200000000000022 L4.0 0.9 L7.1 4.200000000000022" fill="none" stroke="#3a65b2" stroke-width="1.8" stroke-linecap="round" stroke-linejoin="round"/></svg>
<span class="t" style="left:717.70px;top:445.00px;font-size:12px;color:#1d4794;font-weight:bold;transform:scaleX(0.9430);">Рецепты</span>
<svg style="left:718.6px;top:473.8px" width="10.2" height="10.2" viewBox="0 0 10 10" preserveAspectRatio="none"><rect x="3.700" y="0" width="2.600" height="10" rx=".7" fill="#1b8a1b"/><rect x="0" y="3.700" width="10" height="2.600" rx=".7" fill="#1b8a1b"/></svg>
<span class="t" style="left:732.00px;top:474.00px;font-size:12.8px;color:#161616;">Добавить рецепт</span>
<svg style="left:650px;top:415px" width="45" height="40" viewBox="0 0 45 40" preserveAspectRatio="none"><path d="M5 5.300 L36.200 31.400" stroke="#f4101c" stroke-width="1.600" fill="none" stroke-linecap="round"/><path d="M40.400 34.900 L31.900 33.100 L36 31.200 L37.200 26.900 Z" fill="#f4101c"/></svg></div>
</body>
</html>
